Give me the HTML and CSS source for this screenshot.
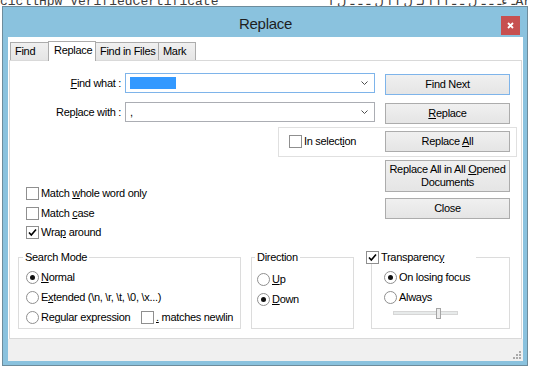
FILE: index.html
```html
<!DOCTYPE html>
<html lang="en">
<head>
  <meta charset="UTF-8">
  <title>Replace</title>
  <link rel="stylesheet" href="styles.css">
</head>
<body>
  <div class="editor-line">cicllHpw VerifiedCertificate<span class="ar">ـ ءـ ـ ـ ل ـ ـ ا ا ا لـ ل ا ا ل ـ ـ ـ ل ا</span>Ar</div>

  <div class="dialog">
    <div class="titlebar">
      <span class="title">Replace</span>
      <div class="close-btn">
        <svg width="7" height="7" viewBox="0 0 7 7"><path d="M1 1L6 6M6 1L1 6" stroke="#fff" stroke-width="1.8"/></svg>
      </div>
    </div>

    <div class="client">
      <div class="tabs">
        <div class="tab tab-find">Find</div>
        <div class="tab tab-replace active">Replace</div>
        <div class="tab tab-files">Find in Files</div>
        <div class="tab tab-mark">Mark</div>
      </div>

      <div class="pane">
        <div class="top">
          <div class="left-col">
            <div class="form">
              <label class="field-label"><u>F</u>ind what :</label>
              <div class="combo focused">
                <span class="sel"></span>
                <svg class="arrow" width="7" height="4" viewBox="0 0 7 4"><polyline points="0.5,0.5 3.5,3.5 6.5,0.5" fill="none" stroke="#4d4d4d"/></svg>
              </div>
              <label class="field-label">Rep<u>l</u>ace with :</label>
              <div class="combo">
                <span class="value">,</span>
                <svg class="arrow" width="7" height="4" viewBox="0 0 7 4"><polyline points="0.5,0.5 3.5,3.5 6.5,0.5" fill="none" stroke="#4d4d4d"/></svg>
              </div>
            </div>

            <div class="options">
              <div class="check"><span class="box"></span><span>Match <u>w</u>hole word only</span></div>
              <div class="check"><span class="box"></span><span>Match <u>c</u>ase</span></div>
              <div class="check">
                <span class="box"><svg width="11" height="11" viewBox="0 0 11 11"><polyline points="2,5.5 4.3,8 9,2.5" fill="none" stroke="#000" stroke-width="1.6"/></svg></span>
                <span>Wra<u>p</u> around</span>
              </div>
            </div>
          </div>

          <div class="right-col">
            <div class="btn focused"><span>Find Next</span></div>
            <div class="btn btn-replace"><span><u>R</u>eplace</span></div>
            <div class="selection-box">
              <div class="check"><span class="box"></span><span>In select<u>i</u>on</span></div>
              <div class="btn"><span>Replace <u>A</u>ll</span></div>
            </div>
            <div class="btn btn-tall"><span>Replace All in All <u>O</u>pened<br>Documents</span></div>
            <div class="btn btn-close"><span>Close</span></div>
          </div>
        </div>

        <div class="groups">
          <fieldset class="group group-mode">
            <legend>Search Mode</legend>
            <div class="group-body">
              <div class="check"><span class="box radio on"></span><span><u>N</u>ormal</span></div>
              <div class="check"><span class="box radio"></span><span>E<u>x</u>tended (\n, \r, \t, \0, \x...)</span></div>
              <div class="check">
                <span class="box radio"></span><span class="regex-text">Re<u>g</u>ular expression</span>
                <span class="box"></span><span><u>.</u> matches newlin</span>
              </div>
            </div>
          </fieldset>

          <fieldset class="group group-dir">
            <legend>Direction</legend>
            <div class="group-body">
              <div class="check"><span class="box radio"></span><span><u>U</u>p</span></div>
              <div class="check"><span class="box radio on"></span><span><u>D</u>own</span></div>
            </div>
          </fieldset>

          <fieldset class="group group-trans">
            <legend>
              <span class="check">
                <span class="box"><svg width="11" height="11" viewBox="0 0 11 11"><polyline points="2,5.5 4.3,8 9,2.5" fill="none" stroke="#000" stroke-width="1.6"/></svg></span>
                <span>Transparenc<u>y</u></span>
              </span>
            </legend>
            <div class="group-body">
              <div class="check"><span class="box radio on"></span><span>On losing focus</span></div>
              <div class="check"><span class="box radio"></span><span>Always</span></div>
              <div class="slider">
                <div class="slider-track"></div>
                <div class="slider-thumb"></div>
              </div>
            </div>
          </fieldset>
        </div>
      </div>

      <div class="statusbar">
        <svg class="grip" width="8" height="8" viewBox="0 0 8 8" fill="#a9a9a9">
          <rect x="6" y="0" width="2" height="2"/>
          <rect x="3" y="3" width="2" height="2"/><rect x="6" y="3" width="2" height="2"/>
          <rect x="0" y="6" width="2" height="2"/><rect x="3" y="6" width="2" height="2"/><rect x="6" y="6" width="2" height="2"/>
        </svg>
      </div>
    </div>
  </div>
</body>
</html>
```

FILE: styles.css
```css
body {
  margin: 0;
  width: 535px;
  height: 370px;
  overflow: hidden;
  position: relative;
  background: #fff;
  font-family: "Liberation Sans", Arial, sans-serif;
  font-size: 11px;
  letter-spacing: -0.3px;
  color: #000;
}
u {
  text-decoration: underline;
  text-underline-offset: 1px;
}

/* editor text behind the dialog */
.editor-line {
  margin-top: -7px;
  font-family: "Liberation Mono", "DejaVu Sans Mono", monospace;
  font-size: 13px;
  line-height: 15px;
  letter-spacing: 0;
  color: #3b3b3b;
  white-space: pre;
}
.editor-line .ar {
  display: inline-block;
  width: 297px;
  font-family: "DejaVu Sans", sans-serif;
  direction: rtl;
}

/* window frame */
.dialog {
  position: absolute;
  left: 2px;
  top: 6px;
  width: 526px;
  height: 360px;
  box-sizing: border-box;
  border: 1px solid #6d8c9c;
  background: #8ac2de;
  padding: 0 4px 4px 5px;
  display: flex;
  flex-direction: column;
}
.titlebar {
  position: relative;
  height: 30px;
  box-sizing: border-box;
  padding-top: 3px;
  display: flex;
  align-items: center;
  justify-content: center;
  font-size: 15px;
  letter-spacing: -0.3px;
  color: #1e1e1e;
}
.close-btn {
  position: absolute;
  right: 3px;
  top: 9px;
  width: 19px;
  height: 19px;
  background: #c75050;
  display: flex;
  align-items: center;
  justify-content: center;
}
.client {
  flex: 1;
  background: #fff;
  display: flex;
  flex-direction: column;
}

/* tabs */
.tabs {
  position: relative;
  z-index: 1;
  height: 23px;
  box-sizing: border-box;
  padding-left: 2px;
  display: flex;
  align-items: flex-end;
}
.tab {
  height: 18px;
  box-sizing: border-box;
  border: 1px solid #acacac;
  border-bottom: 0;
  background: linear-gradient(#f0f0f0, #e5e5e5);
  margin-right: -1px;
  padding: 2px 0 0 4px;
  line-height: 13px;
}
.tab.active {
  position: relative;
  z-index: 2;
  height: 20px;
  margin-bottom: -1px;
  background: #fff;
  padding-left: 5px;
}
.tab-find { width: 39px; }
.tab-replace { width: 48px; }
.tab-files { width: 64px; }
.tab-mark { width: 38px; }

.pane {
  flex: 1;
  margin: 0 1px;
  border: 1px solid #d9d9d9;
  background: #fff;
  padding-top: 12px;
  box-sizing: border-box;
}
.statusbar {
  height: 22px;
  box-sizing: border-box;
  background: #f0f0f0;
  padding: 0 2px 2px 0;
  display: flex;
  justify-content: flex-end;
  align-items: flex-end;
}

/* top part */
.top {
  display: flex;
}
.left-col {
  width: 365px;
}
.form {
  display: grid;
  grid-template-columns: 111px 250px;
  column-gap: 4px;
  row-gap: 9px;
  align-items: center;
}
.field-label {
  text-align: right;
}
.combo {
  height: 20px;
  box-sizing: border-box;
  border: 1px solid #abadb3;
  padding: 0 6px 0 4px;
  display: flex;
  align-items: center;
}
.combo.focused {
  border-color: #7eb4ea;
}
.sel {
  width: 46px;
  height: 12px;
  background: #3399ff;
}
.arrow {
  margin-left: auto;
}

.options {
  margin: 65px 0 0 16px;
  display: flex;
  flex-direction: column;
  gap: 6.5px;
}
.check {
  display: flex;
  align-items: center;
  gap: 2px;
  height: 13px;
  line-height: 13px;
  white-space: nowrap;
}
.box {
  flex: none;
  width: 13px;
  height: 13px;
  box-sizing: border-box;
  border: 1px solid #8f8f8f;
  background: #fff;
  display: flex;
  align-items: center;
  justify-content: center;
}
.radio {
  border-radius: 50%;
}
.radio.on::after {
  content: "";
  width: 5px;
  height: 5px;
  border-radius: 50%;
  background: #111;
}

.right-col {
  width: 125px;
  margin: 1px 0 0 10px;
  display: flex;
  flex-direction: column;
}
.btn {
  flex: none;
  width: 125px;
  height: 21px;
  box-sizing: border-box;
  border: 1px solid #acacac;
  background: linear-gradient(#f0f0f0, #e5e5e5);
  display: flex;
  align-items: center;
  justify-content: center;
  text-align: center;
  line-height: 13px;
}
.btn.focused {
  border-color: #7eb4ea;
}
.btn-replace { margin-top: 8px; }
.btn-tall {
  height: 32px;
  margin-top: 3px;
}
.btn-close { margin-top: 6px; }
.selection-box {
  margin: 3px -7px 0 -107px;
  padding: 3px 6px 4px 10px;
  border: 1px solid #e0e0e0;
  display: flex;
  align-items: center;
  justify-content: space-between;
}

/* group boxes */
.groups {
  display: flex;
  margin: 12px 0 0 8px;
}
.group {
  margin: 0;
  min-width: 0;
  height: 78px;
  box-sizing: border-box;
  border: 1px solid #dcdcdc;
  padding: 7px 0 0 7px;
}
.group legend {
  padding: 0 2px;
  margin-left: -3px;
  height: 13px;
  line-height: 13px;
}
.group-body {
  display: flex;
  flex-direction: column;
  gap: 7px;
}
.group-mode { width: 223px; }
.group-dir {
  width: 103px;
  margin-left: 10px;
  padding: 9px 0 0 5px;
}
.group-dir legend { margin-left: -2px; }
.group-trans {
  width: 139px;
  margin-left: 17px;
  padding-left: 12px;
}
.group-trans legend {
  margin-left: -20px;
  padding: 0 32px 0 2px;
}
.regex-text {
  width: 98px;
}
.slider {
  position: relative;
  width: 65px;
  height: 11px;
  margin: -3px 0 0 9px;
}
.slider-track {
  height: 4px;
  margin-top: 3px;
  box-sizing: border-box;
  border: 1px solid #d6d6d6;
  background: #e7eaea;
}
.slider-thumb {
  position: absolute;
  left: 43px;
  top: 0;
  width: 5px;
  height: 11px;
  box-sizing: border-box;
  border: 1px solid #a5a5a5;
  background: #ececec;
}
```
